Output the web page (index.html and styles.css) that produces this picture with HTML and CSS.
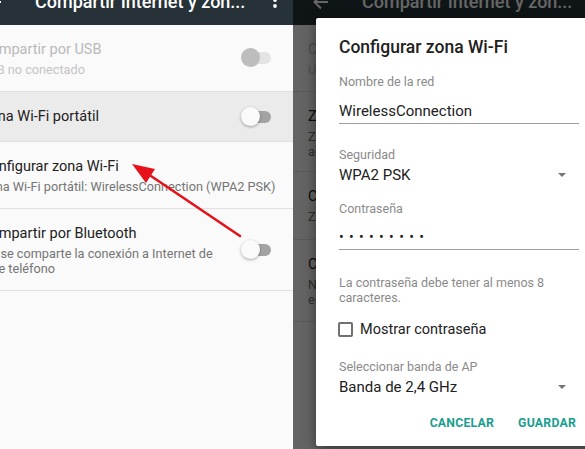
FILE: index.html
```html
<!DOCTYPE html>
<html lang="es">
<head>
<meta charset="utf-8">
<title>Configurar zona Wi-Fi</title>
<link rel="stylesheet" href="styles.css">
</head>
<body>
<div class="stage">
  <section class="pane pane-left">
    <div class="screen screen-left">
      <header class="toolbar">
        <svg class="back" width="16" height="16" viewBox="0 0 16 16"><path d="M15 8H2M8 1.5L1.5 8 8 14.5" fill="none" stroke="#fff" stroke-width="2"/></svg>
        <h1 class="title">Compartir Internet y zon...</h1>
        <svg class="menu" width="4" height="16" viewBox="0 0 4 16"><circle cx="2" cy="2" r="1.9" fill="#fff"/><circle cx="2" cy="8" r="1.9" fill="#fff"/><circle cx="2" cy="14" r="1.9" fill="#fff"/></svg>
      </header>
      <div class="row h67 disabled">
        <div class="texts"><div class="primary">Compartir por USB</div><div class="secondary">USB no conectado</div></div>
        <span class="switch switch-disabled"></span>
      </div>
      <div class="row h50 pressed">
        <div class="texts"><div class="primary">Zona Wi-Fi portátil</div></div>
        <span class="switch switch-off"></span>
      </div>
      <div class="row h67">
        <div class="texts"><div class="primary">Configurar zona Wi-Fi</div><div class="secondary">Zona Wi-Fi portátil: WirelessConnection (WPA2 PSK)</div></div>
      </div>
      <div class="row h82">
        <div class="texts"><div class="primary">Compartir por Bluetooth</div><div class="secondary">No se comparte la conexión a Internet de<br>este teléfono</div></div>
        <span class="switch switch-off"></span>
      </div>
    </div>
    <svg class="annotation" width="293" height="449" viewBox="0 0 293 449">
      <line x1="240" y1="236" x2="148" y2="174" stroke="#e5121b" stroke-width="2.6" stroke-linecap="round"/>
      <polygon points="132,164 155,169 146,183" fill="#e5121b"/>
    </svg>
  </section>

  <section class="pane pane-right">
    <div class="screen">
      <header class="toolbar">
        <svg class="back" width="16" height="16" viewBox="0 0 16 16"><path d="M15 8H2M8 1.5L1.5 8 8 14.5" fill="none" stroke="#fff" stroke-width="2"/></svg>
        <h1 class="title">Compartir Internet y zon...</h1>
        <svg class="menu" width="4" height="16" viewBox="0 0 4 16"><circle cx="2" cy="2" r="1.9" fill="#fff"/><circle cx="2" cy="8" r="1.9" fill="#fff"/><circle cx="2" cy="14" r="1.9" fill="#fff"/></svg>
      </header>
      <div class="row h67 disabled">
        <div class="texts"><div class="primary">Compartir por USB</div><div class="secondary">USB no conectado</div></div>
        <span class="switch switch-disabled"></span>
      </div>
      <div class="row h80">
        <div class="texts"><div class="primary">Zona Wi-Fi portátil</div><div class="secondary">Zona Wi-Fi WirelessConnection<br>activa</div></div>
        <span class="switch switch-off"></span>
      </div>
      <div class="row h68">
        <div class="texts"><div class="primary">Configurar zona Wi-Fi</div><div class="secondary">Zona Wi-Fi portátil: WirelessConnection (WPA2 PSK)</div></div>
      </div>
      <div class="row h82">
        <div class="texts"><div class="primary">Compartir por Bluetooth</div><div class="secondary">No se comparte la conexión a Internet de<br>este teléfono</div></div>
        <span class="switch switch-off"></span>
      </div>
    </div>
    <div class="scrim"></div>
    <div class="dialog">
      <h2 class="dlg-title">Configurar zona Wi-Fi</h2>
      <div class="form">
        <div class="field-label mt15">Nombre de la red</div>
        <div class="field-value input mt11">WirelessConnection</div>
        <div class="field-label mt23">Seguridad</div>
        <div class="field-value select mt2"><span>WPA2 PSK</span><span class="caret"></span></div>
        <div class="field-label mt16">Contraseña</div>
        <div class="field-value input password mt10">•••••••••</div>
        <p class="hint">La contraseña debe tener al menos 8<br>caracteres.</p>
        <label class="check"><span class="box"></span><span>Mostrar contraseña</span></label>
        <div class="field-label mt20">Seleccionar banda de AP</div>
        <div class="field-value select mt2"><span>Banda de 2,4 GHz</span><span class="caret"></span></div>
        <div class="actions">
          <span class="btn">CANCELAR</span>
          <span class="btn">GUARDAR</span>
        </div>
      </div>
    </div>
  </section>
</div>
</body>
</html>
```

FILE: styles.css
```css
* { box-sizing: border-box; margin: 0; padding: 0; }
html, body { width: 585px; height: 449px; overflow: hidden; }
body { font-family: Roboto, "Noto Sans", "Liberation Sans", sans-serif; background: #fafafa; }

.stage { display: flex; width: 585px; height: 449px; }
.pane { position: relative; overflow: hidden; height: 449px; }
.pane-left { width: 293px; flex: none; }
.pane-right { flex: 1; }

.screen { width: 327px; height: 449px; background: #fafafa; display: flex; flex-direction: column; flex: none; }
.screen-left { margin-left: -34px; }

.toolbar {
  height: 25px; flex: none; background: #263238; color: #fff;
  display: flex; align-items: flex-end; padding: 0 16px 11px 20px;
}
.back { flex: none; margin-bottom: 4px; }
.title { font-size: 18px; font-weight: 500; line-height: 24px; margin-left: 33px; white-space: nowrap; }
.menu { flex: none; margin-left: auto; margin-bottom: 6px; }

.row {
  display: flex; align-items: center; flex: none;
  padding: 0 22px 0 15px; border-bottom: 1px solid #e0e0e0;
}
.h50 { height: 50px; }
.h67 { height: 67px; }
.h68 { height: 68px; }
.h80 { height: 80px; }
.h82 { height: 82px; }
.pressed { background: #ebebeb; }
.texts { flex: 1; align-self: flex-start; padding-top: 15px; min-width: 0; }
.primary { font-size: 14.5px; line-height: 20px; color: #212121; white-space: nowrap; }
.secondary { font-size: 12.7px; line-height: 15px; color: #757575; margin-top: 2px; white-space: nowrap; }
.disabled .primary { color: #b9b9b9; }
.disabled .secondary { color: #c4c4c4; }

.switch { position: relative; width: 30px; height: 20px; flex: none; }
.switch::before {
  content: ""; position: absolute; right: 0; top: 4px; width: 26px; height: 12px;
  border-radius: 6px; background: #e4e4e4;
}
.switch::after {
  content: ""; position: absolute; left: 0; top: 0; width: 19px; height: 19px;
  border-radius: 50%; background: #bdbdbd;
}
.switch-off::before { background: #a3a3a3; width: 22px; }
.switch-off::after { background: #fafafa; box-shadow: 0 1px 3px rgba(0,0,0,0.35); }

.annotation { position: absolute; left: 0; top: 0; pointer-events: none; }

.scrim { position: absolute; inset: 0; background: rgba(0,0,0,0.6); }

.dialog {
  position: absolute; left: 23px; top: 18px; width: 300px; height: 428px;
  background: #fff; border-radius: 2px; box-shadow: 0 4px 14px rgba(0,0,0,0.45);
  padding: 17px 0 0 23px;
}
.dlg-title { font-size: 17.5px; font-weight: 500; line-height: 24px; color: #212121; }
.form { width: 240px; display: flex; flex-direction: column; }
.field-label { font-size: 12.5px; line-height: 16px; color: #8a8a8a; }
.field-value { font-size: 15px; line-height: 20px; color: #212121; }
.input { padding-bottom: 2px; border-bottom: 1px solid #9e9e9e; line-height: 20px; }
.password { font-size: 14px; letter-spacing: 5.3px; }
.select { display: flex; align-items: center; justify-content: space-between; padding-right: 13px; }
.caret { width: 0; height: 0; border-left: 4px solid transparent; border-right: 4px solid transparent; border-top: 4px solid #757575; }

.mt2 { margin-top: 2px; }
.mt10 { margin-top: 10px; }
.mt11 { margin-top: 11px; }
.mt15 { margin-top: 15px; }
.mt16 { margin-top: 16px; }
.mt20 { margin-top: 20px; }
.mt23 { margin-top: 23px; }

.hint { font-size: 12.5px; line-height: 15px; color: #8a8a8a; margin-top: 24.5px; }
.check { display: flex; align-items: center; gap: 7px; height: 20px; margin-top: 14.5px; font-size: 14.5px; color: #212121; }
.box { width: 15px; height: 15px; border: 2px solid #707070; border-radius: 2px; margin-left: -1px; flex: none; }

.actions { display: flex; justify-content: flex-end; gap: 24px; padding-right: 3px; margin-top: 16px; line-height: 20px; }
.btn { font-size: 12.3px; font-weight: 700; color: #1b9e90; letter-spacing: 0.2px; }
```
